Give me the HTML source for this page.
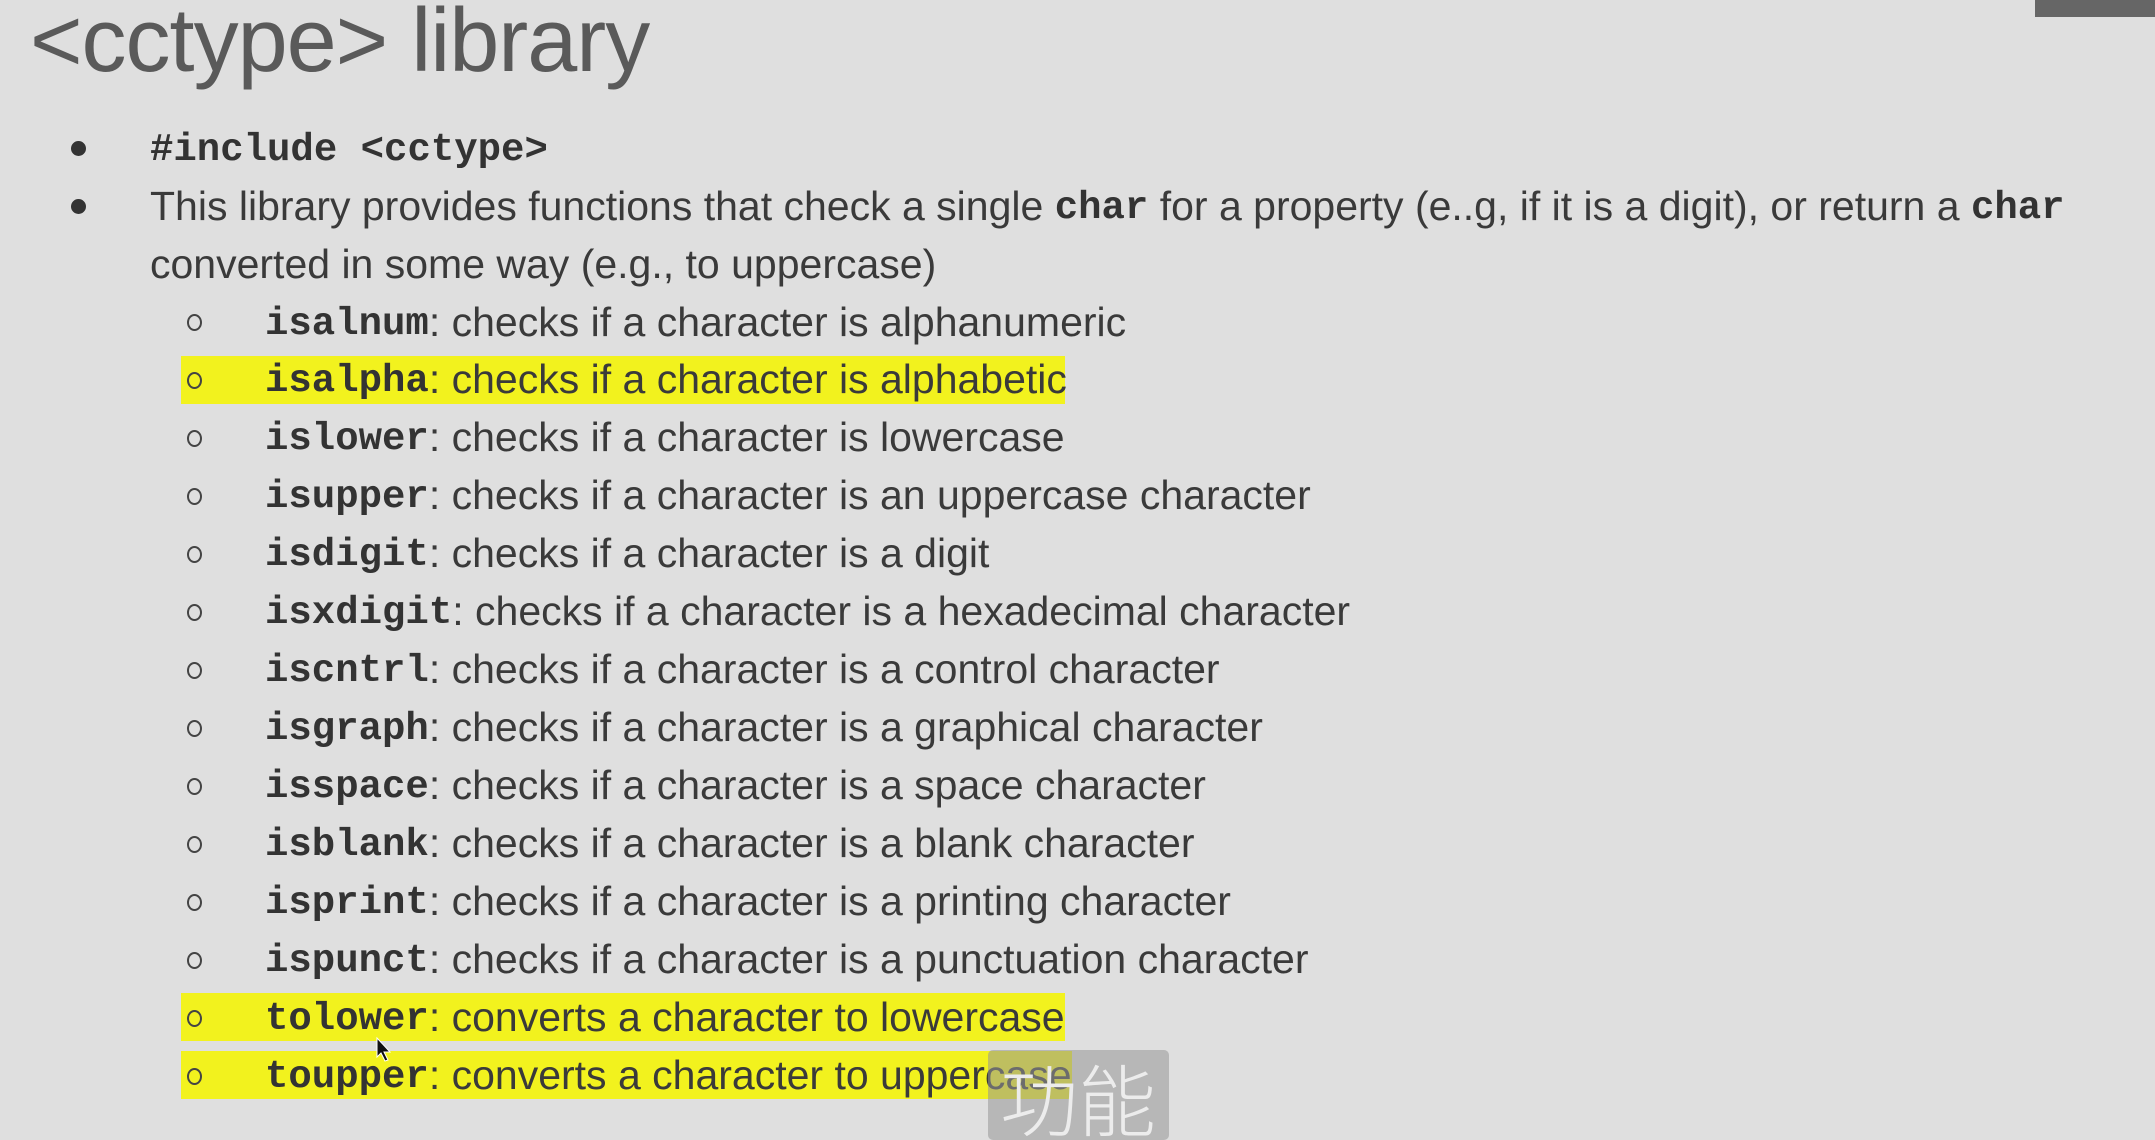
<!DOCTYPE html>
<html><head><meta charset="utf-8"><style>
html,body{margin:0;padding:0}
body{width:2155px;height:1129px;background:#dfdfdf;position:relative;overflow:hidden;font-family:"Liberation Sans",sans-serif;color:#3a3a3a}
.t{position:absolute;left:30px;top:-10px;font-size:90px;color:#5a5a5a;font-weight:300;white-space:nowrap;letter-spacing:-1px}
.l{position:absolute;height:58px;line-height:58px;font-size:41px;white-space:nowrap}
.m{font-family:"Liberation Mono","DejaVu Sans Mono",monospace;font-weight:bold;font-size:39px;color:#333;position:relative;top:-2px}
.dot{position:absolute;width:15px;height:15px;border-radius:50%;background:#333}
.c{position:absolute;width:15px;height:17px;border:2px solid #444;border-radius:50%;box-sizing:border-box}
.hl{position:absolute;background:#f2f21e}
</style></head><body>
<div style="position:absolute;left:2035px;top:0;width:120px;height:17px;background:#666"></div>
<div class="t">&lt;cctype&gt; library</div>

<div class="hl" style="left:181px;top:356px;width:884px;height:48px"></div>
<div class="hl" style="left:181px;top:993px;width:884px;height:48px"></div>
<div class="hl" style="left:181px;top:1051px;width:891px;height:48px"></div>

<div class="dot" style="left:71px;top:141px"></div>
<div class="l" style="left:150px;top:119px"><span class="m">#include &lt;cctype&gt;</span></div>
<div class="dot" style="left:71px;top:199px"></div>
<div class="l" style="left:150px;top:177px">This library provides functions that check a single <span class="m">char</span> for a property (e..g, if it is a digit), or return a <span class="m">char</span></div>
<div class="l" style="left:150px;top:235px">converted in some way (e.g., to uppercase)</div>

<div class="c" style="left:187px;top:314px"></div><div class="l" style="left:265px;top:293px"><span class="m">isalnum</span>: checks if a character is alphanumeric</div>
<div class="c" style="left:187px;top:372px"></div><div class="l" style="left:265px;top:350px"><span class="m">isalpha</span>: checks if a character is alphabetic</div>
<div class="c" style="left:187px;top:430px"></div><div class="l" style="left:265px;top:408px"><span class="m">islower</span>: checks if a character is lowercase</div>
<div class="c" style="left:187px;top:488px"></div><div class="l" style="left:265px;top:466px"><span class="m">isupper</span>: checks if a character is an uppercase character</div>
<div class="c" style="left:187px;top:546px"></div><div class="l" style="left:265px;top:524px"><span class="m">isdigit</span>: checks if a character is a digit</div>
<div class="c" style="left:187px;top:604px"></div><div class="l" style="left:265px;top:582px"><span class="m">isxdigit</span>: checks if a character is a hexadecimal character</div>
<div class="c" style="left:187px;top:662px"></div><div class="l" style="left:265px;top:640px"><span class="m">iscntrl</span>: checks if a character is a control character</div>
<div class="c" style="left:187px;top:720px"></div><div class="l" style="left:265px;top:698px"><span class="m">isgraph</span>: checks if a character is a graphical character</div>
<div class="c" style="left:187px;top:778px"></div><div class="l" style="left:265px;top:756px"><span class="m">isspace</span>: checks if a character is a space character</div>
<div class="c" style="left:187px;top:836px"></div><div class="l" style="left:265px;top:814px"><span class="m">isblank</span>: checks if a character is a blank character</div>
<div class="c" style="left:187px;top:894px"></div><div class="l" style="left:265px;top:872px"><span class="m">isprint</span>: checks if a character is a printing character</div>
<div class="c" style="left:187px;top:952px"></div><div class="l" style="left:265px;top:930px"><span class="m">ispunct</span>: checks if a character is a punctuation character</div>
<div class="c" style="left:187px;top:1010px"></div><div class="l" style="left:265px;top:988px"><span class="m">tolower</span>: converts a character to lowercase</div>
<div class="c" style="left:187px;top:1068px"></div><div class="l" style="left:265px;top:1046px"><span class="m">toupper</span>: converts a character to uppercase</div>

<div style="position:absolute;left:988px;top:1050px;width:181px;height:90px;border-radius:5px;background:rgba(150,150,150,0.55);overflow:hidden">
<div style="position:absolute;left:12px;top:8px;font-family:'Noto Sans CJK SC',sans-serif;font-size:78px;line-height:1;color:#ececec;font-weight:300">功能</div></div>
<svg style="position:absolute;left:376px;top:1037px" width="16" height="26" viewBox="0 0 16 26"><path d="M1 1 L1 20 L5 16 L9 24 L12 23 L8 15 L14 15 Z" fill="#111" stroke="#fff" stroke-width="1"/></svg>
</body></html>
